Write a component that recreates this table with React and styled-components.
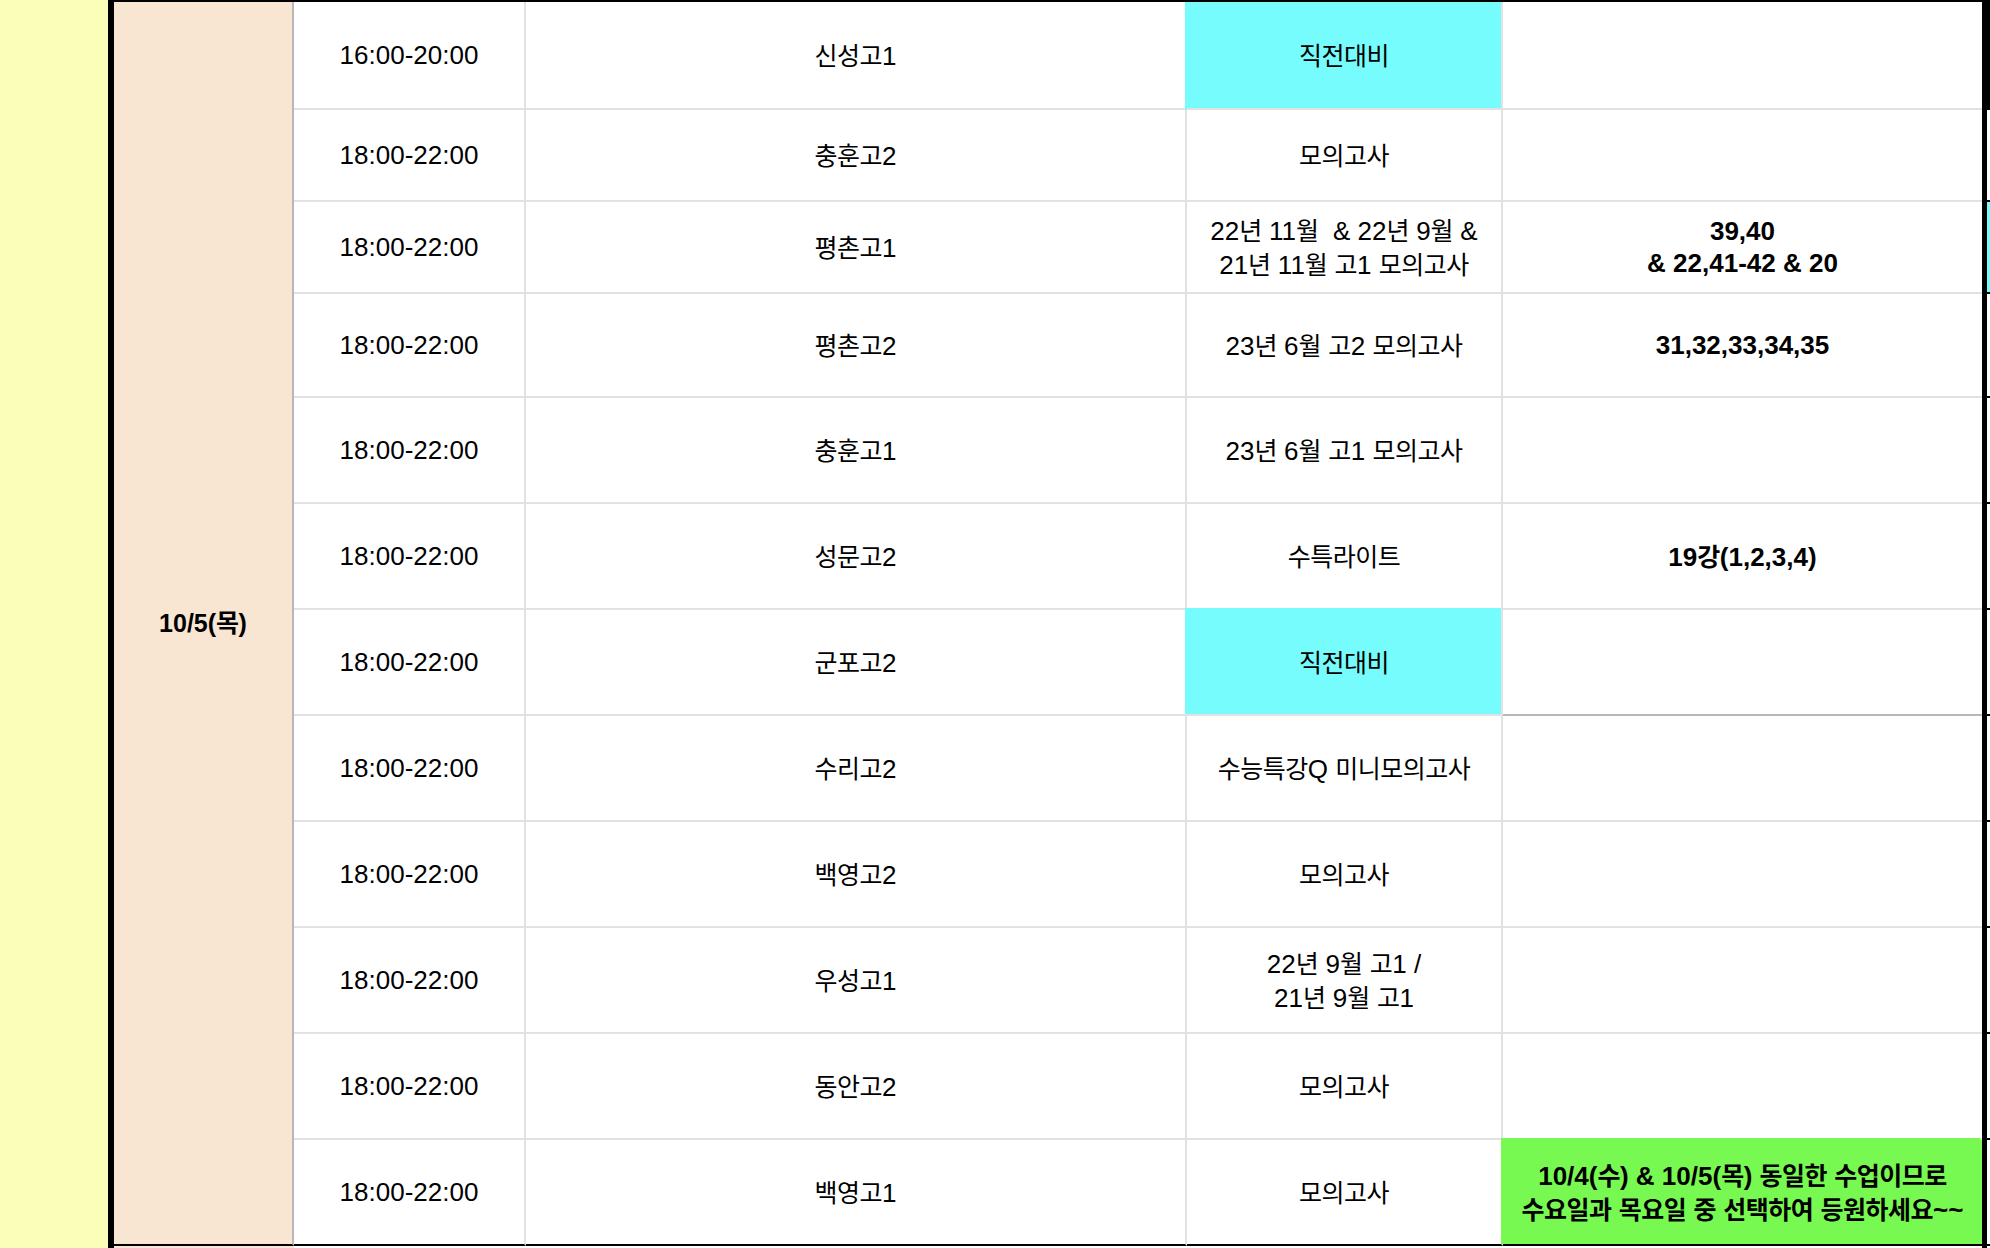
import styled, { createGlobalStyle } from 'styled-components';

const YELLOW = '#fafeb9';
const PEACH = '#f8e6d3';
const CYAN = '#76fcfd';
const GREEN = '#77f951';
const GRID = '#e2e2e2';
const GRID_DARK = '#b8b8b8';

const GlobalStyle = createGlobalStyle`
  html, body {
    margin: 0;
    padding: 0;
    background: #fff;
  }
  body {
    font-family: "Liberation Sans", "Noto Sans CJK KR", Arial, sans-serif;
    color: #000;
  }
`;

const Page = styled.div`
  display: flex;
  width: 1990px;
  height: 1248px;
  overflow: hidden;
`;

const SideStrip = styled.div`
  width: 108px;
  flex-shrink: 0;
  background: ${YELLOW};
`;

const ThickRule = styled.div`
  width: 6px;
  flex-shrink: 0;
  background: #000;
`;

const Sheet = styled.div`
  flex: 1;
  display: grid;
  grid-template-columns: 180px 232px 661px 316px 479px 5px 3px;
  grid-template-rows: 108px 92px 92px 104px repeat(8, 106px) 2px;
  border-top: 2px solid #000;
  background: #fff;
`;

const DateCell = styled.div`
  grid-column: 1;
  grid-row: 1 / span 12;
  display: flex;
  align-items: center;
  justify-content: center;
  padding-bottom: 4px;
  background: ${PEACH};
  border-right: 2px solid ${GRID_DARK};
  border-bottom: 2px solid #000;
  font-size: 25px;
  font-weight: 700;
`;

const DateTail = styled.div`
  grid-column: 1;
  grid-row: 13;
  background: ${PEACH};
`;

const RightRule = styled.div`
  grid-column: 6;
  grid-row: 1 / -1;
  background: #000;
`;

const Cell = styled.div`
  display: flex;
  flex-direction: column;
  align-items: center;
  justify-content: center;
  text-align: center;
  background: ${({ $fill }) => $fill || '#fff'};
  border-right: ${({ $edge }) => ($edge ? 'none' : `2px solid ${GRID}`)};
  border-bottom: 2px solid
    ${({ $last, $strong }) => ($last ? '#000' : $strong ? GRID_DARK : GRID)};
  box-shadow: ${({ $fill, $reachUp }) =>
    $fill ? ($reachUp ? `-2px -2px 0 0 ${$fill}` : `-2px 0 0 0 ${$fill}`) : 'none'};
  font-size: 26px;
  line-height: 32px;
  font-weight: ${({ $bold }) => ($bold ? 700 : 400)};
  white-space: pre;
`;

const NextColumn = styled.div`
  background: ${({ $fill }) => $fill || '#fff'};
  border-bottom: 2px solid #000;
`;

const Line = styled.div`
  display: block;
`;

const Hangul = styled.span`
  font-family: "Noto Sans CJK KR", sans-serif;
  font-size: 25px;
  letter-spacing: -0.5px;
`;

const HANGUL_RUN = /([\uAC00-\uD7A3]+)/;

const withHangul = (text) =>
  text.split(HANGUL_RUN).map((part, i) => (i % 2 ? <Hangul key={i}>{part}</Hangul> : part));

const Lines = ({ lines }) =>
  lines.map((line, i) => <Line key={i}>{withHangul(line)}</Line>);

const rows = [
  { time: '16:00-20:00', school: '신성고1', lesson: ['직전대비'], lessonFill: CYAN, next: '#000' },
  { time: '18:00-22:00', school: '충훈고2', lesson: ['모의고사'] },
  {
    time: '18:00-22:00',
    school: '평촌고1',
    lesson: ['22년 11월  & 22년 9월 &', '21년 11월 고1 모의고사'],
    note: ['39,40', '& 22,41-42 & 20'],
    next: CYAN,
  },
  { time: '18:00-22:00', school: '평촌고2', lesson: ['23년 6월 고2 모의고사'], note: ['31,32,33,34,35'] },
  { time: '18:00-22:00', school: '충훈고1', lesson: ['23년 6월 고1 모의고사'] },
  { time: '18:00-22:00', school: '성문고2', lesson: ['수특라이트'], note: ['19강(1,2,3,4)'] },
  { time: '18:00-22:00', school: '군포고2', lesson: ['직전대비'], lessonFill: CYAN, strongNote: true },
  { time: '18:00-22:00', school: '수리고2', lesson: ['수능특강Q 미니모의고사'] },
  { time: '18:00-22:00', school: '백영고2', lesson: ['모의고사'] },
  { time: '18:00-22:00', school: '우성고1', lesson: ['22년 9월 고1 /', '21년 9월 고1'] },
  { time: '18:00-22:00', school: '동안고2', lesson: ['모의고사'] },
  {
    time: '18:00-22:00',
    school: '백영고1',
    lesson: ['모의고사'],
    note: ['10/4(수) & 10/5(목) 동일한 수업이므로', '수요일과 목요일 중 선택하여 등원하세요~~'],
    noteFill: GREEN,
  },
];

export default function App() {
  return (
    <>
      <GlobalStyle />
      <Page>
        <SideStrip />
        <ThickRule />
        <Sheet>
          <DateCell>
            <Line>{withHangul('10/5(목)')}</Line>
          </DateCell>
          <RightRule />
          {rows.map((row, i) => {
            const last = i === rows.length - 1;
            return [
              <Cell key={`t${i}`} $last={last}>
                <Lines lines={[row.time]} />
              </Cell>,
              <Cell key={`s${i}`} $last={last}>
                <Lines lines={[row.school]} />
              </Cell>,
              <Cell key={`l${i}`} $last={last} $fill={row.lessonFill} $reachUp={i > 0}>
                <Lines lines={row.lesson} />
              </Cell>,
              <Cell
                key={`n${i}`}
                $last={last}
                $edge
                $bold
                $strong={row.strongNote}
                $fill={row.noteFill}
                $reachUp
              >
                {row.note && <Lines lines={row.note} />}
              </Cell>,
              <NextColumn key={`x${i}`} $fill={row.next} />,
            ];
          })}
          <DateTail />
        </Sheet>
      </Page>
    </>
  );
}
